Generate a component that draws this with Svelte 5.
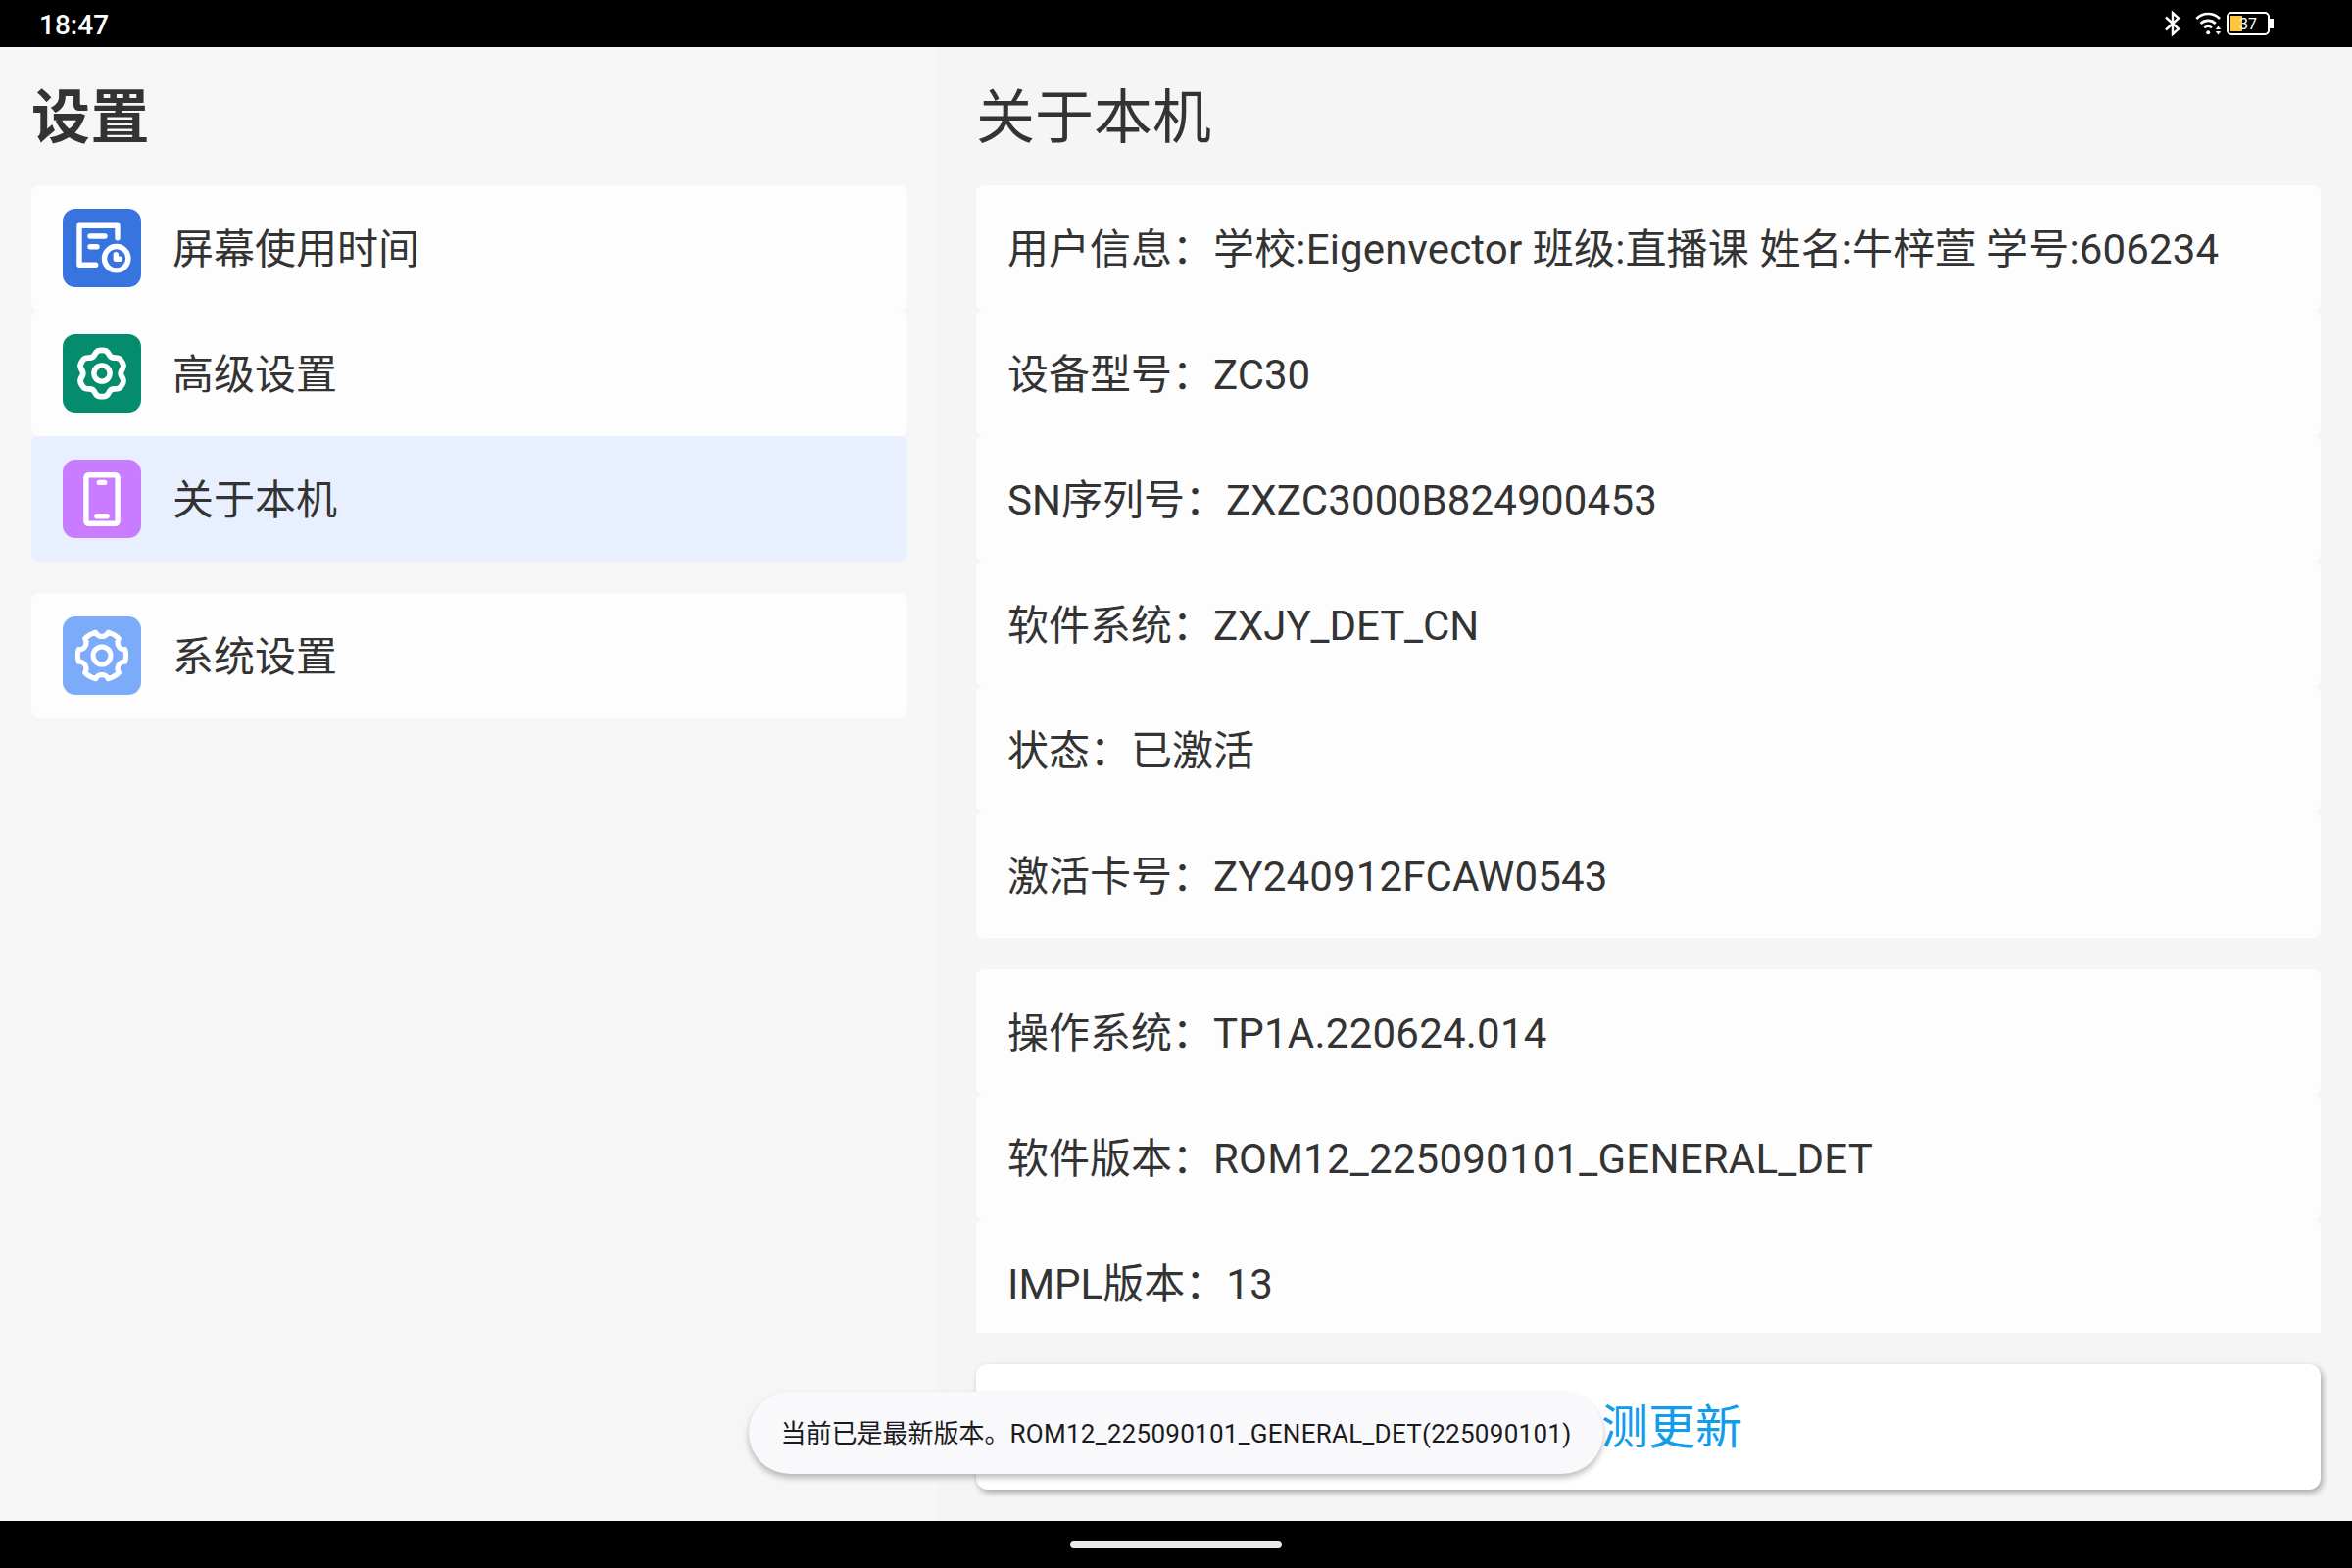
<script lang="ts">
  type MenuItem = { icon: string; label: string; color: string };

  const menuGroups: MenuItem[][] = [
    [
      { icon: 'time', label: '屏幕使用时间', color: '#3874e0' },
      { icon: 'advanced', label: '高级设置', color: '#048c6c' },
      { icon: 'device', label: '关于本机', color: '#c97cff' },
    ],
    [{ icon: 'system', label: '系统设置', color: '#7cacf9' }],
  ];

  // tracking: extra px between the characters of a value
  const infoGroups = [
    [
      { label: '用户信息', value: '学校:Eigenvector 班级:直播课 姓名:牛梓萱 学号:606234', tracking: 0.15 },
      { label: '设备型号', value: 'ZC30', tracking: 0 },
      { label: 'SN序列号', value: 'ZXZC3000B824900453', tracking: 0.2 },
      { label: '软件系统', value: 'ZXJY_DET_CN', tracking: -0.08 },
      { label: '状态', value: '已激活', tracking: 0 },
      { label: '激活卡号', value: 'ZY240912FCAW0543', tracking: 0.14 },
    ],
    [
      { label: '操作系统', value: 'TP1A.220624.014', tracking: 0.23 },
      { label: '软件版本', value: 'ROM12_225090101_GENERAL_DET', tracking: 0.22 },
      { label: 'IMPL版本', value: '13', tracking: 0.4 },
    ],
  ];

  let selected = $state('device');

  // Point on a circle around the icon centre, angle in degrees
  function polar(r: number, deg: number): string {
    const a = (deg * Math.PI) / 180;
    return `${(40 + r * Math.cos(a)).toFixed(2)} ${(40 + r * Math.sin(a)).toFixed(2)}`;
  }

  // Six soft lobes
  function flowerPath(): string {
    let d = '';
    for (let i = 0; i < 6; i++) {
      const a = i * 60 - 90;
      d += `${i ? 'L' : 'M'}${polar(23.6, a - 7)}Q${polar(24, a)} ${polar(23.6, a + 7)}`;
      d += `Q${polar(23.6, a + 13)} ${polar(20.8, a + 20)}Q${polar(18, a + 30)} ${polar(20.8, a + 40)}`;
      d += `Q${polar(23.6, a + 47)} ${polar(23.6, a + 53)}`;
    }
    return d + 'Z';
  }

  // Six round notches cut in a ring
  function cogPath(): string {
    let d = '';
    for (let i = 0; i < 6; i++) {
      const a = i * 60 - 90;
      d += `${i ? 'L' : 'M'}${polar(24.6, a - 15)}A6.9 6.9 0 0 0 ${polar(24.6, a + 15)}`;
      d += `A24.6 24.6 0 0 1 ${polar(24.6, a + 45)}`;
    }
    return d + 'Z';
  }
</script>

<div class="screen">
  <header class="status-bar">
    <span class="clock">18:47</span>
    <div class="status-icons">
      <svg class="bluetooth" width="16" height="26" viewBox="0 0 16 26" fill="none" stroke="#fff" stroke-width="2.4">
        <path d="M1 6.5L14 18.5L8 24V2L14 7.5L1 19.5" />
      </svg>
      <svg class="wifi" width="28" height="26" viewBox="0 0 28 26" fill="none" stroke="#fff" stroke-width="2.6">
        <path d="M1.3 8A16.5 16.5 0 0 1 25 8" />
        <path d="M5.5 13A11 11 0 0 1 20.8 13" />
        <path d="M9.3 17.4A5.8 5.8 0 0 1 17 17.4" />
        <circle cx="13.2" cy="22.3" r="2" fill="#fff" stroke="none" />
        <path d="M23.5 15.5L26.2 19H20.8ZM20.8 21H26.2L23.5 24.5Z" fill="#fff" stroke="none" />
      </svg>
      <div class="battery">
        <div class="battery-body">
          <div class="battery-level"></div>
          <span class="battery-text">37</span>
        </div>
        <div class="battery-cap"></div>
      </div>
    </div>
  </header>

  <main class="content">
    <aside class="sidebar">
      <h1>设置</h1>
      {#each menuGroups as group}
        <nav class="group">
          {#each group as item}
            <button class="row menu-row" class:selected={selected === item.icon} onclick={() => (selected = item.icon)}>
              <svg class="menu-icon" viewBox="0 0 80 80" fill="none" stroke="#fff" stroke-width="5.4" stroke-linecap="round" stroke-linejoin="round">
                <rect width="80" height="80" rx="13" fill={item.color} stroke="none" />
                {#if item.icon === 'time'}
                  <path d="M56 29.7V17.3H17V57.3H33.7M28 28H43M28 38.7H35" />
                  <circle cx="54.7" cy="50.7" r="12.2" />
                  <path d="M54.3 46.8V51.2H58.3" />
                {:else if item.icon === 'advanced'}
                  <path d={flowerPath()} stroke-width="5.8" />
                  <circle cx="40" cy="40" r="8.1" />
                {:else if item.icon === 'device'}
                  <rect x="23.9" y="15.8" width="32.2" height="49.4" rx="2.5" />
                  <path d="M37.3 23.4H42.7M35 57.8H45" />
                {:else}
                  <path d={cogPath()} stroke-width="5" />
                  <circle cx="40" cy="40" r="9" stroke-width="5" />
                {/if}
              </svg>
              <span>{item.label}</span>
            </button>
          {/each}
        </nav>
      {/each}
    </aside>

    <div class="divider"></div>

    <section class="detail">
      <h2>关于本机</h2>
      <div class="info-list">
        {#each infoGroups as group}
          <div class="group">
            {#each group as info}
              <div class="row info-row">
                {info.label}：<span style="letter-spacing: {info.tracking}px">{info.value}</span>
              </div>
            {/each}
          </div>
        {/each}
      </div>
      <button class="update-btn">检测更新</button>
    </section>
  </main>

  <footer class="nav-bar">
    <div class="handle"></div>
  </footer>

  <div class="toast">当前已是最新版本。<span class="version">ROM12_225090101_GENERAL_DET(225090101)</span></div>
</div>

<style>
  :global(body) {
    margin: 0;
  }

  .screen {
    position: relative;
    display: flex;
    flex-direction: column;
    width: 2400px;
    height: 1600px;
    overflow: hidden;
    background: #f6f6f6;
    color: #333;
    font-family: Roboto, 'Noto Sans CJK SC', sans-serif;
  }

  button {
    border: none;
    font: inherit;
    color: inherit;
    text-align: left;
  }

  .status-bar {
    display: flex;
    align-items: center;
    justify-content: space-between;
    flex: none;
    box-sizing: border-box;
    height: 48px;
    padding: 0 80px 0 40px;
    background: #000;
    color: #fff;
  }

  .clock {
    padding-top: 3px;
    font-size: 28px;
    font-weight: 500;
    line-height: 48px;
  }

  .status-icons {
    display: flex;
    align-items: center;
  }

  .wifi {
    margin: 0 4px 0 15px;
  }

  .battery {
    display: flex;
    align-items: center;
  }

  .battery-body {
    position: relative;
    box-sizing: border-box;
    width: 44px;
    height: 24px;
    padding: 2px;
    border: 2px solid #fff;
    border-radius: 5px;
  }

  .battery-level {
    width: 12px;
    height: 16px;
    background: #ffc540;
  }

  .battery-text {
    position: absolute;
    inset: 0;
    font-size: 16px;
    line-height: 21px;
    text-align: center;
  }

  .battery-cap {
    width: 4px;
    height: 10px;
    background: #fff;
  }

  .content {
    display: flex;
    flex: 1;
    min-height: 0;
  }

  .sidebar {
    box-sizing: border-box;
    width: 958px;
    padding: 0 32px;
  }

  h1,
  h2 {
    box-sizing: border-box;
    height: 141px;
    margin: 0;
    padding-top: 3px;
    font-size: 60px;
    line-height: 138px;
  }

  h1 {
    padding-top: 4px;
    letter-spacing: 0.5px;
  }

  h2 {
    flex: none;
    padding-top: 4px;
    font-weight: 400;
  }

  .group + .group {
    margin-top: 32px;
  }

  .row {
    box-sizing: border-box;
    height: 128px;
    padding: 2px 32px 0;
    border-radius: 8px;
    background: #fdfdfd;
    font-size: 42px;
    line-height: 126px;
    white-space: nowrap;
  }

  .info-row {
    line-height: 128px;
  }

  .menu-row {
    display: flex;
    align-items: center;
    gap: 32px;
    width: 894px;
    padding: 0 32px;
  }

  .menu-row span {
    padding-top: 4px;
    line-height: 124px;
  }

  .menu-row.selected {
    background: #e8f0ff;
  }

  .menu-icon {
    width: 80px;
    height: 80px;
  }

  .divider {
    width: 6px;
    background: #f4f4f4;
  }

  .detail {
    display: flex;
    flex-direction: column;
    flex: 1;
    box-sizing: border-box;
    min-height: 0;
    padding: 0 32px;
    background: #f5f5f5;
  }

  .info-list {
    height: 1171px;
    overflow: hidden;
  }

  .update-btn {
    flex: none;
    height: 128px;
    margin-top: 32px;
    padding: 2px 0 0;
    border-radius: 12px;
    background: #fff;
    box-shadow: 2px 3px 6px rgba(0, 0, 0, 0.32);
    color: #129cec;
    font-size: 48px;
    line-height: 126px;
    text-align: center;
  }

  .nav-bar {
    display: flex;
    align-items: center;
    justify-content: center;
    flex: none;
    height: 48px;
    background: #000;
  }

  .handle {
    width: 216px;
    height: 8px;
    border-radius: 4px;
    background: #ebebeb;
  }

  .toast {
    position: absolute;
    left: 764px;
    top: 1420px;
    box-sizing: border-box;
    width: 872px;
    height: 84px;
    padding-top: 1px;
    border-radius: 42px;
    background: #f9f9fc;
    box-shadow: 0 4px 6px rgba(0, 0, 0, 0.26);
    color: #1b1b1e;
    font-size: 26px;
    line-height: 84px;
    text-align: center;
    white-space: nowrap;
  }

  .version {
    letter-spacing: 0.28px;
  }
</style>
